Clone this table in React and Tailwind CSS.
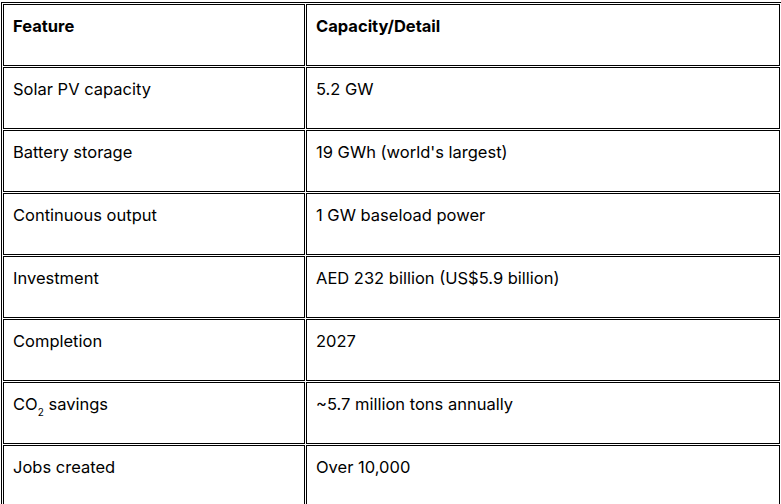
const rows = [
  ['Solar PV capacity', '5.2 GW'],
  ['Battery storage', "19 GWh (world's largest)"],
  ['Continuous output', '1 GW baseload power'],
  ['Investment', 'AED 232 billion (US$5.9 billion)'],
  ['Completion', '2027'],
  [<>CO<sub className="text-[10px] align-[-3px]">2</sub> savings</>, '~5.7 million tons annually'],
  ['Jobs created', 'Over 10,000'],
]

function Cell({ children, bold }) {
  return (
    <td className="border border-black align-top px-[9px] pt-[10px] pb-[10px]">
      <p className={`mb-[18px] leading-[22px] ${bold ? 'font-bold' : ''}`}>{children}</p>
    </td>
  )
}

export default function App() {
  return (
    <div className="w-[781px] h-[504px] overflow-hidden bg-white text-black text-[16.5px] font-['Inter',sans-serif]">
      <table className="ml-px mt-[2px] w-[781px] border border-black border-separate border-spacing-px table-fixed">
        <colgroup>
          <col className="w-[302px]" />
          <col />
        </colgroup>
        <thead>
          <tr>
            <Cell bold>Feature</Cell>
            <Cell bold>Capacity/Detail</Cell>
          </tr>
        </thead>
        <tbody>
          {rows.map(([feature, detail], i) => (
            <tr key={i}>
              <Cell>{feature}</Cell>
              <Cell>{detail}</Cell>
            </tr>
          ))}
        </tbody>
      </table>
    </div>
  )
}
